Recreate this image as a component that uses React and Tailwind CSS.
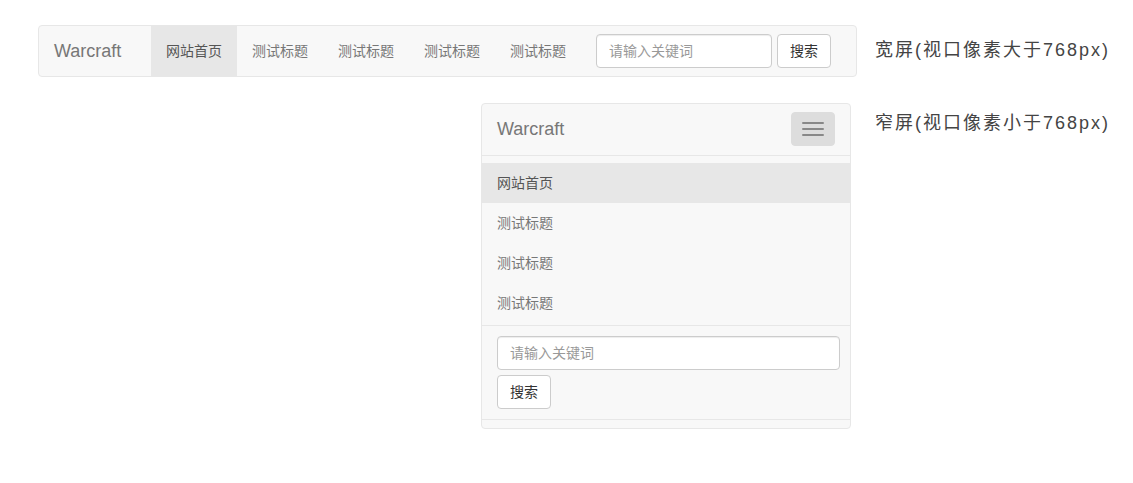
const NAV = ["网站首页", "测试标题", "测试标题", "测试标题", "测试标题"];

const FONT = {
  fontFamily: '"Liberation Sans", Arial, "Noto Sans CJK SC", sans-serif',
};

function SearchInput({ className = "" }) {
  return (
    <input
      type="text"
      placeholder="请输入关键词"
      className={`h-[34px] rounded-[4px] border border-[#ccc] bg-white px-3 text-[14px] text-[#555] shadow-[inset_0_1px_1px_rgba(0,0,0,0.075)] outline-none placeholder:text-[#999] ${className}`}
    />
  );
}

function SearchButton() {
  return (
    <button className="h-[34px] rounded-[4px] border border-[#ccc] bg-white px-3 text-[14px] text-[#333]">
      搜索
    </button>
  );
}

function WideNavbar() {
  return (
    <nav className="ml-[38px] flex h-[52px] w-[819px] items-stretch rounded-[4px] border border-[#e7e7e7] bg-[#f8f8f8]">
      <a className="flex w-[112px] items-center pl-[15px] text-[18px] text-[#777]">Warcraft</a>
      <ul className="flex">
        {NAV.map((t, i) => (
          <li
            key={i}
            className={`flex items-center px-[15px] text-[14px] ${
              i === 0 ? "bg-[#e7e7e7] text-[#555]" : "text-[#777]"
            }`}
          >
            {t}
          </li>
        ))}
      </ul>
      <form className="ml-[15px] flex items-center gap-[5px]">
        <SearchInput className="w-[176px]" />
        <SearchButton />
      </form>
    </nav>
  );
}

function NarrowNavbar() {
  return (
    <nav className="ml-[481px] w-[370px] rounded-[4px] border border-[#e7e7e7] bg-[#f8f8f8]">
      <div className="flex h-[51px] items-center justify-between pl-[15px] pr-[15px]">
        <a className="text-[18px] text-[#777]">Warcraft</a>
        <button className="mt-[-1px] flex h-[34px] w-[44px] flex-col items-center justify-center gap-[4px] rounded-[4px] border border-[#ddd] bg-[#ddd]">
          <span className="block h-[2px] w-[22px] rounded-[1px] bg-[#888]" />
          <span className="block h-[2px] w-[22px] rounded-[1px] bg-[#888]" />
          <span className="block h-[2px] w-[22px] rounded-[1px] bg-[#888]" />
        </button>
      </div>
      <div className="border-t border-[#e7e7e7] pt-[7px]">
        <ul>
          {NAV.slice(0, 4).map((t, i) => (
            <li
              key={i}
              className={`flex h-[40px] items-center px-[15px] text-[14px] ${
                i === 0 ? "bg-[#e7e7e7] text-[#555]" : "text-[#777]"
              }`}
            >
              {t}
            </li>
          ))}
        </ul>
        <form className="mt-[2px] flex flex-col items-start gap-[5px] border-y border-[#e7e7e7] px-[15px] py-[10px]">
          <SearchInput className="w-[343px]" />
          <SearchButton />
        </form>
        <div className="h-[8px]" />
      </div>
    </nav>
  );
}

export default function App() {
  return (
    <div className="min-h-[483px] w-[1133px] bg-white pt-[25px]" style={FONT}>
      <div className="flex items-start">
        <WideNavbar />
        <p className="ml-[18px] mt-[12px] text-[18px] leading-[27px] tracking-[2px] text-[#444]">
          宽屏(视口像素大于768px)
        </p>
      </div>
      <div className="mt-[26px] flex items-start">
        <NarrowNavbar />
        <p className="ml-[24px] mt-[7px] text-[18px] leading-[27px] tracking-[2px] text-[#444]">
          窄屏(视口像素小于768px)
        </p>
      </div>
    </div>
  );
}
